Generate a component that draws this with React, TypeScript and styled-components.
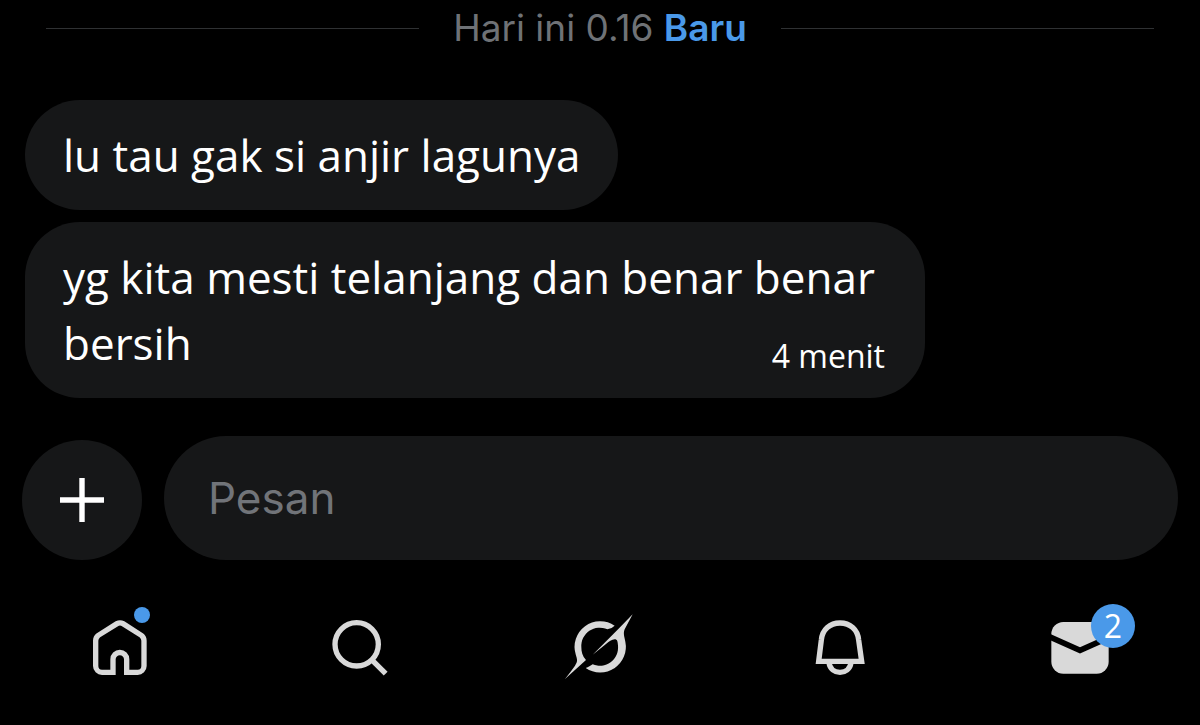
import React from "react";
import styled, { createGlobalStyle } from "styled-components";

const GlobalStyle = createGlobalStyle`
  * { box-sizing: border-box; }
  body { margin: 0; background: #000; }
`;

const Screen = styled.main`
  display: flex;
  flex-direction: column;
  min-height: 100vh;
  background: #000;
  color: #fff;
  font-family: "Open Sans", "Noto Sans", sans-serif;
`;

const DateDivider = styled.div`
  display: flex;
  align-items: center;
  gap: 34px;
  height: 56px;
  padding: 0 46px;
  font-family: Inter, sans-serif;
  font-size: 37px;
  line-height: 56px;
  color: #6f7276;
  white-space: nowrap;

  &::before,
  &::after {
    content: "";
    flex: 1;
    height: 1px;
    background: #2f3133;
  }
`;

const NewLabel = styled.strong`
  font-weight: 600;
  color: #4a99e9;
`;

const Messages = styled.section`
  display: flex;
  flex-direction: column;
  align-items: flex-start;
  gap: 12px;
  padding: 44px 25px 0;
`;

const Bubble = styled.div`
  display: grid;
  max-width: 900px;
  padding: 22px 38px;
  border-radius: 55px;
  background: #161718;
`;

const BubbleText = styled.p`
  grid-area: 1 / 1;
  margin: 0;
  font-size: 44px;
  line-height: 66px;
`;

const Time = styled.time`
  grid-area: 1 / 1;
  place-self: end;
  padding-right: 2px;
  font-size: 32px;
  line-height: 40px;
`;

const Composer = styled.form`
  display: flex;
  align-items: flex-end;
  gap: 22px;
  padding: 38px 22px 0;
`;

const AddButton = styled.button`
  display: grid;
  place-items: center;
  flex: none;
  width: 120px;
  height: 120px;
  padding: 0;
  border: 0;
  border-radius: 50%;
  background: #161718;
  color: #fff;
`;

const MessageInput = styled.input`
  flex: 1;
  min-width: 0;
  height: 124px;
  padding: 0 44px;
  border: 0;
  border-radius: 62px;
  outline: 0;
  background: #161718;
  color: #fff;
  font-family: Inter, sans-serif;
  font-size: 44px;

  &::placeholder {
    color: #717479;
    opacity: 1;
  }
`;

const TabBar = styled.nav`
  display: flex;
  padding: 52px 0 41px;
`;

const Tab = styled.a`
  display: flex;
  flex: 1;
  justify-content: center;
  color: #d9d9d9;
  text-decoration: none;
`;

const IconBox = styled.span`
  position: relative;
  width: 72px;
  height: 72px;

  svg { display: block; }
`;

const Dot = styled.span`
  position: absolute;
  top: -5px;
  right: 6px;
  width: 16px;
  height: 16px;
  border-radius: 50%;
  background: #4a99e9;
`;

const Badge = styled.span`
  position: absolute;
  top: -8px;
  right: -19px;
  width: 44px;
  height: 44px;
  border-radius: 50%;
  background: #4a99e9;
  color: #fff;
  font-size: 32px;
  line-height: 44px;
  text-align: center;
`;

const PlusIcon = () => (
  <svg width="44" height="44" viewBox="0 0 44 44" fill="none" stroke="currentColor" strokeWidth="5.4" aria-hidden="true">
    <path d="M0 22H44M22 0V44" />
  </svg>
);

const HomeIcon = () => (
  <svg width="72" height="72" viewBox="42 66 216 216" fill="none" stroke="currentColor" strokeWidth="16" aria-hidden="true">
    <path d="M129 247H96A19 19 0 0 1 77 228V152Q77 142 85 136L141 101Q150 96 159 101L214 136Q222 142 222 152V228A19 19 0 0 1 203 247H170V208A20.5 20.5 0 0 0 129 208Z" />
  </svg>
);

const SearchIcon = () => (
  <svg width="72" height="72" viewBox="42 36 216 216" fill="none" stroke="currentColor" strokeWidth="16" aria-hidden="true">
    <circle cx="140" cy="133" r="65" />
    <path d="M184 178L227 221" />
  </svg>
);

const GrokIcon = () => (
  <svg width="72" height="72" viewBox="42 36 216 216" fill="currentColor" aria-hidden="true">
    <path d="M194 77A77 77 0 0 0 77 163C82 180 84 184 75 197C68 207 57 222 45 237L108 180C97 168 94 155 94 141A55 55 0 0 1 172 88Q184 87 194 77Z" />
    <path d="M248 43L224 88C219 100 223 110 226 125A77 77 0 0 1 107 204C115 202 122 197 128 193A55 55 0 0 0 204 137C203 124 202 118 194 118C186 118 176 126 168 132L128 164L202 90Z" />
  </svg>
);

const BellIcon = () => (
  <svg width="72" height="72" viewBox="42 36 216 216" fill="none" stroke="currentColor" strokeWidth="16" aria-hidden="true">
    <path d="M86 184L94 120C97 88 120 69 150 69C180 69 203 88 206 120L215 184Z" />
    <path d="M117 188C122 227 178 227 183 188" />
  </svg>
);

const MailIcon = () => (
  <svg width="72" height="72" viewBox="42 66 216 216" fill="currentColor" aria-hidden="true">
    <rect x="64" y="96" width="172" height="155" rx="36" />
    <path d="M56 139L150 181L244 139" fill="none" stroke="#000" strokeWidth="17" />
  </svg>
);

export default function App() {
  return (
    <Screen>
      <GlobalStyle />
      <DateDivider>
        <span>
          Hari ini 0.16 <NewLabel>Baru</NewLabel>
        </span>
      </DateDivider>
      <Messages>
        <Bubble>
          <BubbleText>lu tau gak si anjir lagunya</BubbleText>
        </Bubble>
        <Bubble>
          <BubbleText>yg kita mesti telanjang dan benar benar bersih</BubbleText>
          <Time>4 menit</Time>
        </Bubble>
      </Messages>
      <Composer onSubmit={(e) => e.preventDefault()}>
        <AddButton type="button" aria-label="Tambah">
          <PlusIcon />
        </AddButton>
        <MessageInput type="text" placeholder="Pesan" aria-label="Pesan" />
      </Composer>
      <TabBar>
        <Tab href="#home" aria-label="Beranda">
          <IconBox>
            <HomeIcon />
            <Dot />
          </IconBox>
        </Tab>
        <Tab href="#search" aria-label="Cari">
          <IconBox>
            <SearchIcon />
          </IconBox>
        </Tab>
        <Tab href="#grok" aria-label="Grok">
          <IconBox>
            <GrokIcon />
          </IconBox>
        </Tab>
        <Tab href="#notifications" aria-label="Notifikasi">
          <IconBox>
            <BellIcon />
          </IconBox>
        </Tab>
        <Tab href="#messages" aria-label="Pesan">
          <IconBox>
            <MailIcon />
            <Badge>2</Badge>
          </IconBox>
        </Tab>
      </TabBar>
    </Screen>
  );
}
